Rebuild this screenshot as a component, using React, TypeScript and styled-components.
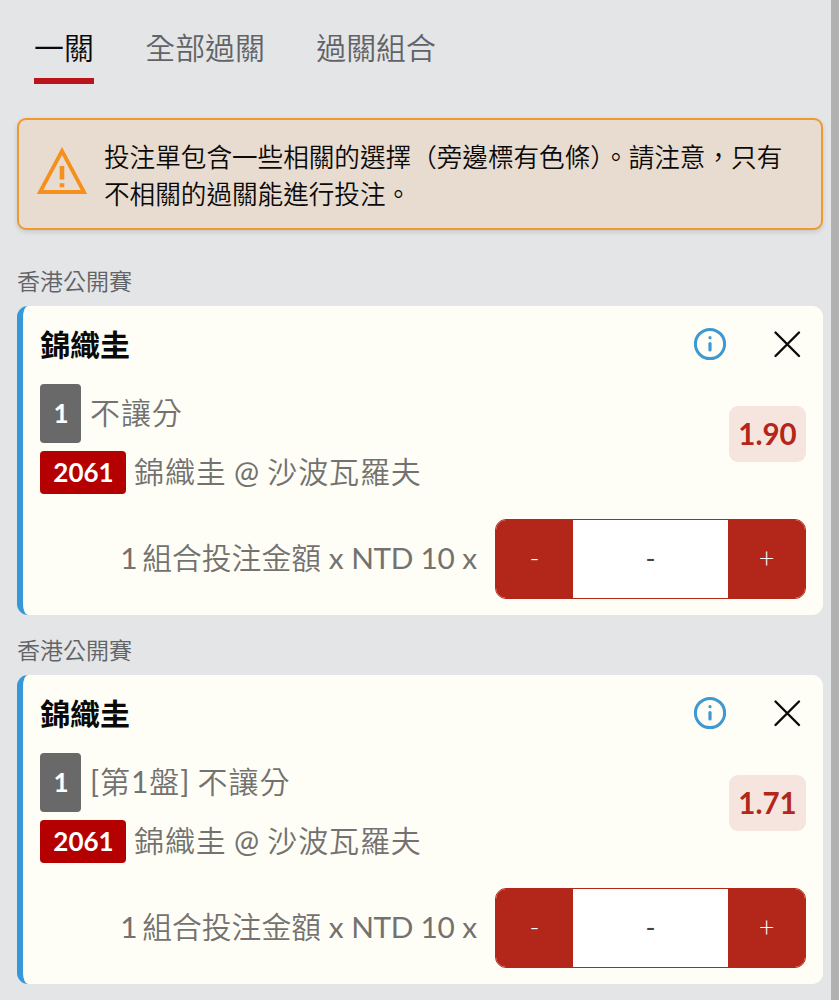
import React from 'react';
import styled, { createGlobalStyle } from 'styled-components';

const GlobalStyle = createGlobalStyle`
  * { box-sizing: border-box; }
  body {
    margin: 0;
    background: #e3e5e7;
    font-family: Lato, "Noto Sans CJK TC", sans-serif;
    color: #0a0a0a;
  }
  button { font: inherit; border: 0; padding: 0; background: none; }
`;

const Page = styled.div`
  width: 839px;
  height: 1000px;
  overflow: hidden;
  display: flex;
`;

const Slip = styled.main`
  flex: 1;
  min-width: 0;
  padding: 0 8px 0 17px;
`;

const Scrollbar = styled.div`
  width: 8px;
  background: #b1b1b1;
`;

const Tabs = styled.nav`
  display: flex;
  gap: 51.5px;
  padding: 0 17px;
  height: 118px;
  align-items: flex-start;
`;

const Tab = styled.button<{ $active?: boolean }>`
  height: 84px;
  padding: 17px 0 1px;
  font-size: 29.9px;
  font-weight: 350;
  line-height: 60px;
  color: ${p => (p.$active ? '#0a0a0a' : '#626366')};
  border-bottom: 6px solid ${p => (p.$active ? '#b9151b' : 'transparent')};
`;

const Notice = styled.section`
  display: flex;
  height: 112px;
  padding: 18.5px 17px 0 17px;
  border: 2px solid #f09832;
  border-radius: 9px;
  background: #e8dcd0;
  box-shadow: 0 2px 5px rgba(0, 0, 0, 0.13);
`;

const NoticeIcon = styled.svg`
  flex: none;
  width: 52px;
  height: 50px;
  margin: 6.5px 16.5px 0 -0.5px;
`;

const NoticeText = styled.p`
  margin: 0;
  font-size: 25.6px;
  font-weight: 350;
  line-height: 37px;
`;

const League = styled.h2`
  margin: 0;
  font-size: 23px;
  font-weight: 350;
  line-height: 34px;
  color: #626366;
`;

const Bets = styled.div`
  padding-top: 34px;
`;

const Bet = styled.section`
  height: 369px;
`;

const Card = styled.article`
  height: 309.5px;
  margin-top: 7.5px;
  padding: 0 17px;
  border-left: 6px solid #3598db;
  border-radius: 11px;
  background: #fffef6;
`;

const CardHead = styled.header`
  display: flex;
  align-items: center;
  height: 78px;
  padding-bottom: 2px;
`;

const Player = styled.h3`
  flex: 1;
  margin: 0;
  font-size: 30px;
  font-weight: 700;
  line-height: 44px;
`;

const InfoIcon = styled.svg`
  width: 34px;
  height: 34px;
  margin-right: 45px;
`;

const CloseIcon = styled.svg`
  width: 30px;
  height: 30px;
  margin-right: 4px;
`;

const Selection = styled.div`
  display: flex;
  height: 109px;
`;

const Lines = styled.div`
  flex: 1;
`;

const Line = styled.div<{ $height: number }>`
  display: flex;
  align-items: center;
  height: ${p => p.$height}px;
  margin-bottom: 8px;
  color: #737270;
`;

const LineText = styled.span`
  font-size: 30px;
  line-height: 38px;
  letter-spacing: 0.9px;
  word-spacing: -1.3px;
  padding-bottom: 3px;
`;

const Han = styled.span`
  font-weight: 350;
`;

const Tag = styled.span<{ $tone: string; $width: number; $gap: number }>`
  display: flex;
  align-items: center;
  justify-content: center;
  align-self: stretch;
  width: ${p => p.$width}px;
  margin-right: ${p => p.$gap}px;
  border-radius: 4px;
  background: ${p => p.$tone};
  color: #fff;
  font-size: 26px;
  font-weight: 700;
  padding: 0 0 1px 1px;
`;

const Odds = styled.div`
  width: 77px;
  height: 56px;
  margin-top: 22px;
  border-radius: 9px;
  background: #f6e5de;
  color: #b3261a;
  font-size: 29.5px;
  font-weight: 700;
  line-height: 55px;
  text-align: center;
`;

const Stake = styled.div`
  display: flex;
  align-items: center;
  justify-content: flex-end;
  margin-top: 26px;
`;

const StakeLabel = styled.span`
  margin-right: 18px;
  padding-bottom: 5px;
  font-size: 29.8px;
  color: #737270;
`;

const Count = styled.span`
  word-spacing: -3px;
`;

const Currency = styled.span`
  letter-spacing: -0.3px;
`;

const Stepper = styled.div`
  display: flex;
  width: 311px;
  height: 80px;
  border: 1.5px solid #b3261a;
  border-radius: 11px;
  overflow: hidden;
  background: #fff;
`;

const StepButton = styled.button`
  width: 77px;
  padding-bottom: 3px;
  background: #b3261a;
  color: #fff;
  font-size: 27px;
  font-weight: 300;
`;

const StakeValue = styled.div`
  flex: 1;
  display: flex;
  align-items: center;
  justify-content: center;
  padding-bottom: 2px;
  font-size: 27px;
  color: #444;
`;

const bets = [
  { market: '不讓分', odds: '1.90' },
  { market: '[第1盤] 不讓分', odds: '1.71' },
];

/* Chinese runs use a lighter weight than the Latin text beside them. */
function Mixed({ text }: { text: string }) {
  return (
    <LineText>
      {text.split(/([\u4e00-\u9fff]+)/).map((run, i) =>
        i % 2 ? <Han key={i}>{run}</Han> : run
      )}
    </LineText>
  );
}

function BetCard({ market, odds }: { market: string; odds: string }) {
  return (
    <Bet>
      <League>香港公開賽</League>
      <Card>
        <CardHead>
          <Player>錦織圭</Player>
          <InfoIcon viewBox="0 0 34 34" fill="none" stroke="#3d98d3">
            <circle cx="17" cy="17" r="14.6" strokeWidth="3" />
            <path d="M17 16.5v6.5" strokeWidth="3.2" strokeLinecap="round" />
            <circle cx="17" cy="10.7" r="1.6" fill="#3d98d3" stroke="none" />
          </InfoIcon>
          <CloseIcon viewBox="0 0 30 30" fill="none" stroke="#0a0a0a" strokeWidth="2.4" strokeLinecap="round">
            <path d="M3.5 3.5l23.5 23.5M27 3.5L3.5 27" />
          </CloseIcon>
        </CardHead>
        <Selection>
          <Lines>
            <Line $height={59}>
              <Tag $tone="#696969" $width={41} $gap={9}>1</Tag>
              <Mixed text={market} />
            </Line>
            <Line $height={43}>
              <Tag $tone="#b40000" $width={86} $gap={8}>2061</Tag>
              <Mixed text="錦織圭 @ 沙波瓦羅夫" />
            </Line>
          </Lines>
          <Odds>{odds}</Odds>
        </Selection>
        <Stake>
          <StakeLabel>
            <Count>1 </Count>
            <Han>組合投注金額</Han> x <Currency>NTD 10</Currency> x
          </StakeLabel>
          <Stepper>
            <StepButton>-</StepButton>
            <StakeValue>-</StakeValue>
            <StepButton>+</StepButton>
          </Stepper>
        </Stake>
      </Card>
    </Bet>
  );
}

export default function App() {
  return (
    <>
      <GlobalStyle />
      <Page>
        <Slip>
          <Tabs>
            <Tab $active>一關</Tab>
            <Tab>全部過關</Tab>
            <Tab>過關組合</Tab>
          </Tabs>
          <Notice>
            <NoticeIcon viewBox="0 0 52 50" fill="none" stroke="#f5901e">
              <path d="M26 6L48 47H4Z" strokeWidth="3.8" />
              <path d="M26 21v13.5M26 38.2v4" strokeWidth="4.6" />
            </NoticeIcon>
            <NoticeText>
              投注單包含一些相關的選擇（旁邊標有色條）。請注意，只有
              <br />
              不相關的過關能進行投注。
            </NoticeText>
          </Notice>
          <Bets>
            {bets.map(b => (
              <BetCard key={b.odds} {...b} />
            ))}
          </Bets>
        </Slip>
        <Scrollbar />
      </Page>
    </>
  );
}
